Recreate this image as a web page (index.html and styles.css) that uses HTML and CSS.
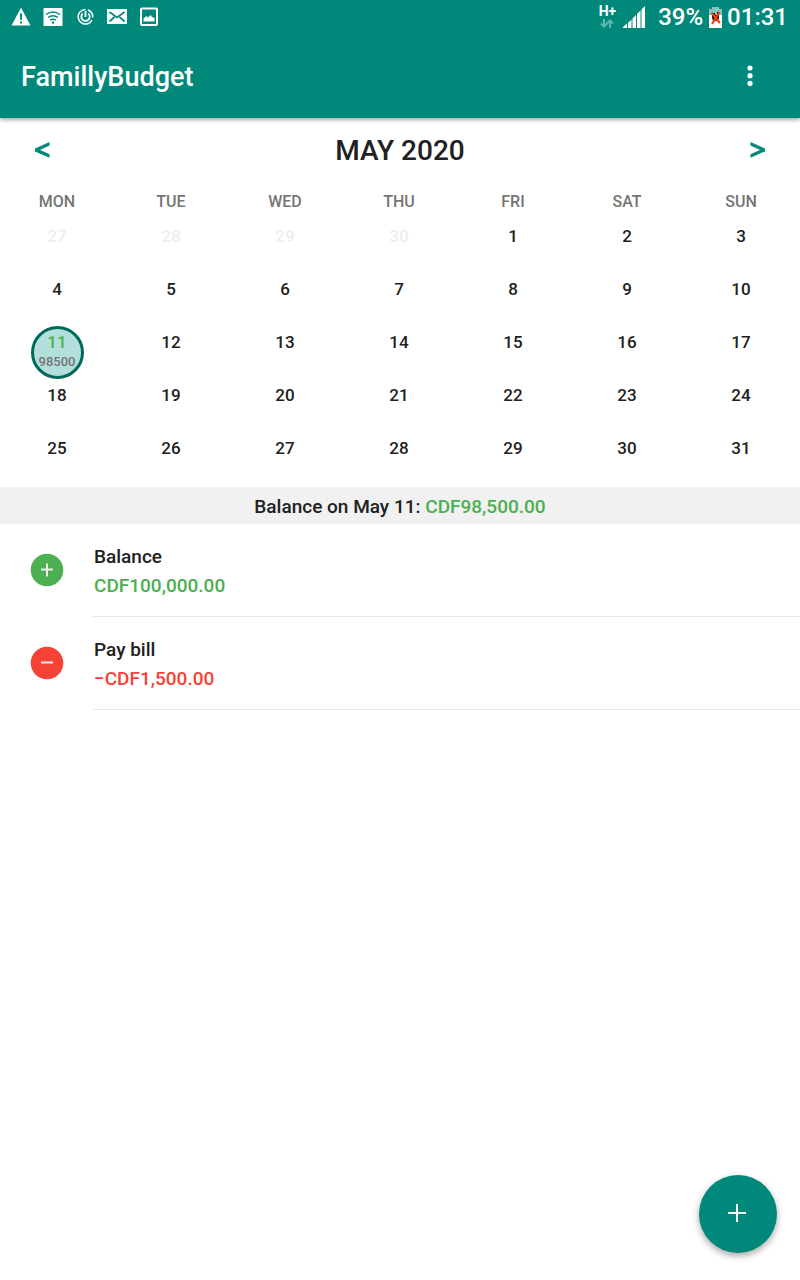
FILE: index.html
```html
<!DOCTYPE html>
<html lang="en">
<head>
<meta charset="utf-8">
<meta name="viewport" content="width=device-width, initial-scale=1">
<title>FamillyBudget</title>
<link rel="stylesheet" href="styles.css">
</head>
<body>
<header class="top">
  <div class="status">
    <div class="status-icons">
      <svg width="20" height="20" viewBox="0 0 20 20"><path fill="#fff" d="M10 .8 19.500 18.500H.5z"/><path fill="#00897b" d="M8.800 6.500h2.400l-.4 6.500H9.200zM9 14.500h2v2H9z"/></svg>
      <svg width="20" height="20" viewBox="0 0 20 20"><rect x=".5" y="1" width="19" height="18" rx="1" fill="#fff"/><g fill="none" stroke="#00897b" stroke-width="1.500"><path d="M3 7.500Q10 2.500 17 7.500M5 10.500q5-3.600 10 0M7.200 13.200q2.800-2 5.600 0"/></g><circle cx="10" cy="15.500" r="1.200" fill="#00897b"/></svg>
      <svg width="20" height="20" viewBox="0 0 20 20" fill="none" stroke="#fff" stroke-width="1.500"><path d="M10.500 2.500a7.300 7.300 0 1 0 6.500 10.500M12.800 3a7.300 7.300 0 0 1 4.900 7.500"/><path d="M7.700 6.500a4.200 4.200 0 1 0 5.600 0M10.500 4v6" stroke-width="1.800"/></svg>
      <svg width="20" height="20" viewBox="0 0 20 20"><rect y="2" width="20" height="15" fill="#fff"/><path d="m2.500 5 7.500 5.500L17.500 5M2.500 14.500l5-4.500M17.500 14.500l-5-4.500" fill="none" stroke="#00897b" stroke-width="1.700"/></svg>
      <svg width="20" height="20" viewBox="0 0 20 20"><rect x="2" y="1.500" width="16" height="16.500" rx="1" fill="none" stroke="#fff" stroke-width="2"/><path fill="#fff" d="M4.500 14.500v-3l3-2.500 1.500 1.500L11.500 8l1.500 2 2.500 1v3.500z"/></svg>
    </div>
    <div class="status-info">
      <div class="network">
        <span>H+</span>
        <svg width="14" height="9" viewBox="0 0 14 9" fill="none" stroke="#62b5ac" stroke-width="2"><path d="M4 0v7M1 4.500l3 3 3-3M10 9V2M7 4.500l3-3 3 3"/></svg>
      </div>
      <svg class="signal" width="22" height="22" viewBox="0 0 22 22" fill="#fff"><path d="M0 22v-1l4-3.500V22zM5 22v-5l3.500-3.500V22zM9.500 22v-9.500L13 9v13zM14 22V8l3.500-3.500V22zM18.500 22V3.500L22 0v22z"/></svg>
      <span>39%</span>
      <svg class="battery" width="13" height="21" viewBox="0 0 13 21"><path fill="#80c4bd" d="M3 0h7v2h3v6H0V2h3z"/><path fill="#fff" d="M0 8h13v13H0z"/><path fill="#222" d="M3 6h3v2h2V5h2v6l-1 3H4l-1-3z"/><path d="m2.500 6 8.500 10M10.500 5 3 17" stroke="#f4390b" stroke-width="2"/></svg>
      <span>01:31</span>
    </div>
  </div>
  <div class="app-bar">
    <h1>FamillyBudget</h1>
    <button class="menu" type="button" aria-label="More options"><svg width="6" height="22" viewBox="0 0 6 22" fill="#fff"><circle cx="3" cy="3" r="2.600"/><circle cx="3" cy="10.700" r="2.600"/><circle cx="3" cy="18.400" r="2.600"/></svg></button>
  </div>
</header>
<main>
  <div class="month">
    <button type="button" aria-label="Previous month"><svg width="15" height="16" viewBox="0 0 15 16"><path d="M14.500 0v3.600L5 8l9.500 4.200v3.600L0 9.400V6.500z"/></svg></button>
    <h2>MAY 2020</h2>
    <button type="button" aria-label="Next month"><svg width="15" height="16" viewBox="0 0 15 16"><path d="M.5 0v3.600L10 8 .5 12.200v3.600L15 9.400V6.500z"/></svg></button>
  </div>
  <div class="month-days">
    <table class="calendar">
      <thead><tr><th>MON</th><th>TUE</th><th>WED</th><th>THU</th><th>FRI</th><th>SAT</th><th>SUN</th></tr></thead>
      <tbody>
        <tr><td class="other">27</td><td class="other">28</td><td class="other">29</td><td class="other">30</td><td>1</td><td>2</td><td>3</td></tr>
        <tr><td>4</td><td>5</td><td>6</td><td>7</td><td>8</td><td>9</td><td>10</td></tr>
        <tr><td class="current"><button class="day" type="button">11<small>98500</small></button></td><td>12</td><td>13</td><td>14</td><td>15</td><td>16</td><td>17</td></tr>
        <tr><td>18</td><td>19</td><td>20</td><td>21</td><td>22</td><td>23</td><td>24</td></tr>
        <tr><td>25</td><td>26</td><td>27</td><td>28</td><td>29</td><td>30</td><td>31</td></tr>
      </tbody>
    </table>
  </div>
  <p class="balance">Balance on May 11: <span class="income">CDF98,500.00</span></p>
  <ul class="entries">
    <li>
      <svg width="34" height="34" viewBox="0 0 34 34"><circle cx="17" cy="17" r="16.300" fill="#4caf50"/><path d="M11 16.500h12M17 10.500v13" stroke="#eee" stroke-width="2"/></svg>
      <div class="entry"><span>Balance</span><span class="income">CDF100,000.00</span></div>
    </li>
    <li>
      <svg width="34" height="34" viewBox="0 0 34 34"><circle cx="17" cy="17" r="16.300" fill="#f44336"/><path d="M11 16.500h12" stroke="#eee" stroke-width="2"/></svg>
      <div class="entry"><span>Pay bill</span><span class="expense">−CDF1,500.00</span></div>
    </li>
  </ul>
</main>
<button class="add" type="button" aria-label="Add entry"><svg width="20" height="20" viewBox="0 0 20 20"><path d="M0 9h18M9 0v18" stroke="#fff" stroke-width="2"/></svg></button>
</body>
</html>
```
FILE: styles.css
```css
* { box-sizing: border-box; }
body {
  margin: 0;
  background: #fff;
  color: #212121;
  font: 500 19px/29px Roboto, "Liberation Sans", sans-serif;
}
h1, h2, p, ul { margin: 0; padding: 0; font-weight: 500; }
svg { display: block; flex: none; }
button {
  border: 0;
  padding: 0;
  background: none;
  color: inherit;
  font: inherit;
  cursor: pointer;
}
.top {
  position: relative;
  background: #00897b;
  color: #fff;
  box-shadow: 0 2px 4px rgba(0, 0, 0, .35);
}
.status {
  display: flex;
  justify-content: space-between;
  align-items: center;
  height: 34px;
  padding: 0 12px 0 11px;
}
.status-icons { display: flex; gap: 12px; }
.status-info {
  display: flex;
  align-items: center;
  font-size: 24px;
  line-height: 36px;
}
.network {
  display: flex;
  flex-direction: column;
  align-items: center;
  margin-right: 7px;
  padding-bottom: 2px;
  font-size: 14px;
  font-weight: 700;
  line-height: 15px;
}
.signal { margin-right: 13px; }
.battery { margin: 0 5px 0 6px; }
.app-bar {
  display: flex;
  justify-content: space-between;
  align-items: center;
  height: 84px;
  padding: 0 31px 0 21px;
}
h1 { padding-top: 2px; font-size: 27px; line-height: 36px; }
.menu {
  display: grid;
  place-items: center;
  width: 38px;
  height: 48px;
}
.month {
  display: flex;
  justify-content: space-between;
  align-items: center;
  height: 64px;
  padding: 0 22px;
}
.month button {
  display: grid;
  place-items: center;
  width: 40px;
  height: 48px;
  fill: #00897b;
}
h2 { padding-top: 2px; font-size: 28px; line-height: 36px; }
.month-days { padding-right: 2px; }
.calendar {
  width: 100%;
  table-layout: fixed;
  border-collapse: collapse;
  font-size: 17px;
  line-height: 20px;
  text-align: center;
}
.calendar th {
  height: 38px;
  padding: 2px 0 0;
  color: #757575;
  font-size: 16px;
  font-weight: 500;
}
.calendar td {
  height: 53px;
  padding: 6px 0 0;
  vertical-align: top;
}
.calendar .other { color: #eee; }
.calendar .current { padding: 0; }
.day {
  display: block;
  width: 53px;
  height: 53px;
  margin: 0 auto;
  padding-bottom: 1px;
  border: 3px solid #00695c;
  border-radius: 50%;
  background: #b2dfdb;
  color: #4caf50;
}
.day small {
  display: block;
  color: #757575;
  font-size: 13px;
}
.balance {
  margin-top: 2px;
  padding: 5px 0 3px;
  background: #f1f1f1;
  text-align: center;
}
.income { color: #4caf50; }
.expense { color: #f44336; }
.entries { list-style: none; }
.entries li {
  display: flex;
  align-items: center;
  gap: 29px;
  padding-left: 30px;
}
.entries svg { margin-bottom: 2px; }
.entry {
  display: flex;
  flex: 1;
  flex-direction: column;
  padding: 18px 0 16px 1px;
  border-bottom: 1px solid #e8e8e8;
}
.add {
  position: fixed;
  right: 23px;
  bottom: 27px;
  display: grid;
  place-items: center;
  width: 78px;
  height: 78px;
  border-radius: 50%;
  background: #00897b;
  box-shadow: 0 3px 7px rgba(0, 0, 0, .35);
}
```
